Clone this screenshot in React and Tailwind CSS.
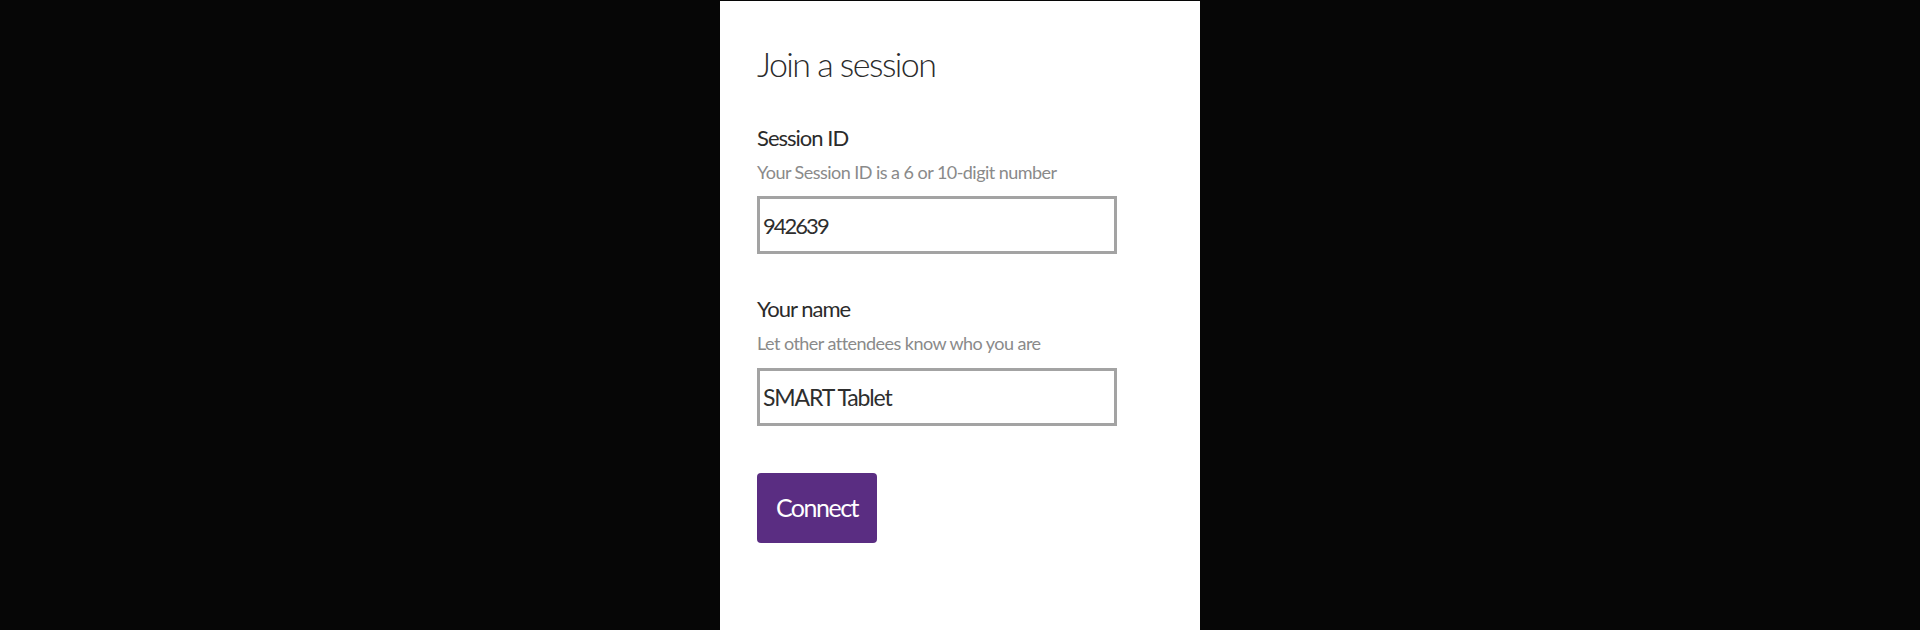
export default function App() {
  return (
    <div className="w-[1920px] h-[630px] bg-[#060606] flex justify-center" style={{ fontFamily: "Lato, 'Noto Sans', sans-serif" }}>
      <div className="w-[480px] mt-[1px] h-[629px] bg-white pl-[37px] pt-[41px]">
        <h1 className="text-[34px] leading-[44px] text-[#2b2b2b] font-light tracking-[-0.045em]">Join a session</h1>
        <div className="mt-[38px] text-[22px] leading-[28px] text-[#2b2b2b] tracking-[-0.045em]">Session ID</div>
        <div className="mt-[8px] text-[18px] leading-[24px] text-[#8a8a8a] tracking-[-0.03em]">Your Session ID is a 6 or 10-digit number</div>
        <div className="mt-[12px] w-[360px] h-[58px] border-[3px] border-[#a3a3a3] flex items-center pl-[3px] text-[22px] text-[#2e2e2e] tracking-[-0.09em]">942639</div>
        <div className="mt-[41px] text-[22px] leading-[28px] text-[#2b2b2b] tracking-[-0.045em]">Your name</div>
        <div className="mt-[8px] text-[18px] leading-[24px] text-[#8a8a8a] tracking-[-0.03em]">Let other attendees know who you are</div>
        <div className="mt-[13px] w-[360px] h-[58px] border-[3px] border-[#a3a3a3] flex items-center pl-[3px] text-[23px] text-[#2e2e2e] tracking-[-0.05em]">SMART Tablet</div>
        <button className="mt-[47px] w-[120px] h-[70px] rounded-[4px] bg-[#5a2d82] text-white text-[25px] tracking-[-0.06em] flex items-center justify-center">Connect</button>
      </div>
    </div>
  );
}
